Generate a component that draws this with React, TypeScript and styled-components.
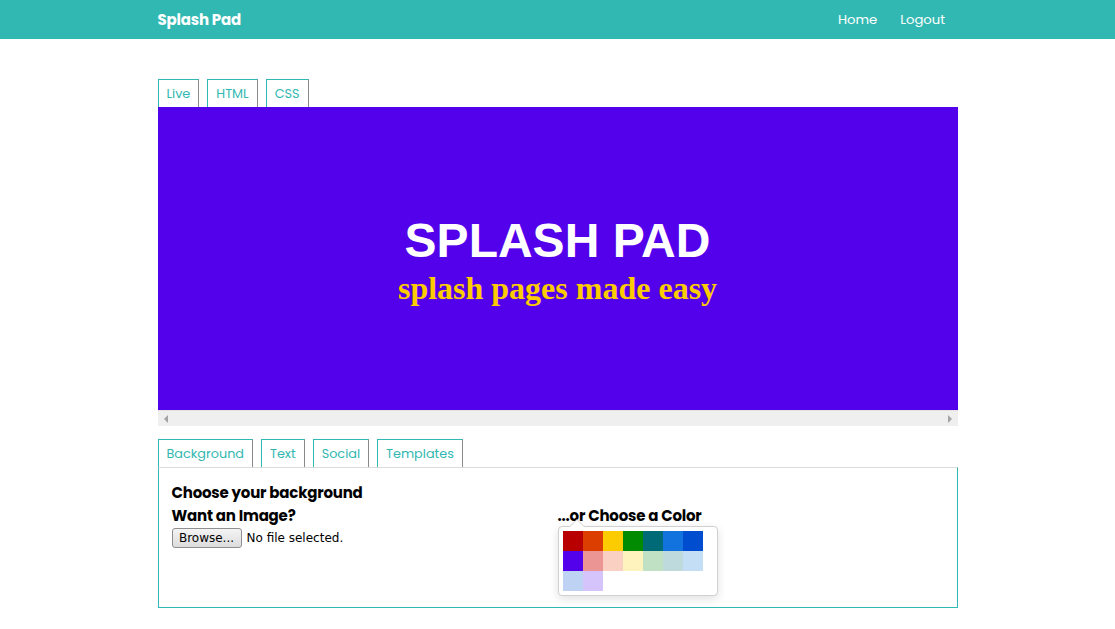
import React from "react";
import styled, { createGlobalStyle } from "styled-components";

const TEAL = "#32b8b2";
const UI = `"Poppins", "Inter", "Noto Sans", sans-serif`;

const Global = createGlobalStyle`
  html, body { margin: 0; padding: 0; background: #fff; }
  body { font-family: ${UI}; }
  * { box-sizing: border-box; }
`;

const Nav = styled.nav`
  height: 39px;
  background: ${TEAL};
`;

const NavInner = styled.div`
  width: 800px;
  margin: 0 auto;
  height: 100%;
  display: flex;
  align-items: center;
  justify-content: space-between;
`;

const Brand = styled.a`
  color: #fff;
  font-weight: 700;
  font-size: 15px;
  letter-spacing: -0.2px;
`;

const NavLinks = styled.div`
  display: flex;
  padding-right: 1px;
`;

const NavLink = styled.a`
  color: #fff;
  font-size: 13.2px;
  padding: 0 11.5px;
`;

const Main = styled.main`
  width: 800px;
  margin: 40px auto 0;
`;

const TabRow = styled.div`
  display: flex;
  gap: 8px;
`;

const Tab = styled.button`
  height: 28px;
  padding: 0 8px;
  background: #fff;
  border: 1px solid ${TEAL};
  border-right-color: #8a8a8a;
  border-bottom: none;
  color: ${TEAL};
  font-family: ${UI};
  font-size: 12.8px;
  line-height: 26px;
  cursor: pointer;
`;

const Preview = styled.div`
  height: 303px;
  background: #5300eb;
  display: flex;
  flex-direction: column;
  align-items: center;
  justify-content: center;
  padding-top: 4px;
`;

const Title = styled.h1`
  margin: 0;
  color: #fff;
  font-family: "Liberation Sans", Arial, sans-serif;
  font-weight: 700;
  font-size: 48px;
  line-height: 54px;
`;

const Subtitle = styled.h2`
  margin: 0;
  color: #fccb00;
  font-family: "Liberation Serif", "Times New Roman", serif;
  font-weight: 700;
  font-size: 32px;
  line-height: 40px;
`;

const Scrollbar = styled.div`
  height: 16px;
  background: #efefef;
  border-top: 1px solid #e2e2e2;
  display: flex;
  align-items: center;
  justify-content: space-between;
  padding: 0 6px;
`;

const Arrow = styled.span<{ $dir: "left" | "right" }>`
  width: 0;
  height: 0;
  border-top: 4px solid transparent;
  border-bottom: 4px solid transparent;
  ${(p) =>
    p.$dir === "left"
      ? "border-right: 4px solid #a3a3a3;"
      : "border-left: 4px solid #a3a3a3;"}
`;

const Editor = styled.section`
  margin-top: 13px;
`;

const Panel = styled.div`
  height: 141px;
  border: 1px solid ${TEAL};
  border-top: 1px solid #dcdcdc;
  padding: 15px 13px;
`;

const Heading = styled.h3`
  margin: 0;
  font-size: 15px;
  font-weight: 700;
  line-height: 19px;
  color: #000;
  letter-spacing: -0.2px;
`;

const Columns = styled.div`
  display: grid;
  grid-template-columns: 1fr 1fr;
  margin-top: 4px;
`;

const Column = styled.div`
  display: flex;
  flex-direction: column;
  align-items: flex-start;
`;

const FileRow = styled.div`
  display: flex;
  align-items: center;
  gap: 5px;
  margin-top: 3px;
  font-family: "DejaVu Sans", Tahoma, sans-serif;
  font-size: 12px;
  color: #000;
`;

const BrowseButton = styled.button`
  height: 20px;
  width: 70px;
  padding: 0;
  border: 1px solid #8f8f8f;
  border-radius: 3px;
  background: linear-gradient(#f4f4f4, #dcdcdc);
  font-family: "DejaVu Sans", Tahoma, sans-serif;
  font-size: 12px;
  color: #000;
`;

const Picker = styled.div`
  position: relative;
  margin-top: 1px;
  width: 160px;
  padding: 4px;
  background: #fff;
  border: 1px solid #d0d0d0;
  border-radius: 4px;
  box-shadow: 0 3px 10px rgba(0, 0, 0, 0.12);
  display: flex;
  flex-wrap: wrap;
  &::before {
    content: "";
    position: absolute;
    top: -8px;
    left: 10px;
    border: 8px solid transparent;
    border-top: 0;
    border-bottom-color: #d0d0d0;
  }
  &::after {
    content: "";
    position: absolute;
    top: -7px;
    left: 11px;
    border: 7px solid transparent;
    border-top: 0;
    border-bottom-color: #fff;
  }
`;

const Swatch = styled.div<{ $c: string }>`
  width: 20px;
  height: 20px;
  background: ${(p) => p.$c};
`;

const colors = [
  "#B80000", "#DB3E00", "#FCCB00", "#008B02", "#006B76", "#1273DE", "#004DCF",
  "#5300EB", "#EB9694", "#FAD0C3", "#FEF3BD", "#C1E1C5", "#BEDADC", "#C4DEF6",
  "#BED3F3", "#D4C4FB",
];

export default function App() {
  return (
    <>
      <Global />
      <Nav>
        <NavInner>
          <Brand>Splash Pad</Brand>
          <NavLinks>
            <NavLink>Home</NavLink>
            <NavLink>Logout</NavLink>
          </NavLinks>
        </NavInner>
      </Nav>
      <Main>
        <TabRow>
          <Tab>Live</Tab>
          <Tab>HTML</Tab>
          <Tab>CSS</Tab>
        </TabRow>
        <Preview>
          <Title>SPLASH PAD</Title>
          <Subtitle>splash pages made easy</Subtitle>
        </Preview>
        <Scrollbar>
          <Arrow $dir="left" />
          <Arrow $dir="right" />
        </Scrollbar>
        <Editor>
          <TabRow>
            <Tab>Background</Tab>
            <Tab>Text</Tab>
            <Tab>Social</Tab>
            <Tab>Templates</Tab>
          </TabRow>
          <Panel>
            <Heading>Choose your background</Heading>
            <Columns>
              <Column>
                <Heading>Want an Image?</Heading>
                <FileRow>
                  <BrowseButton>Browse...</BrowseButton>
                  <span>No file selected.</span>
                </FileRow>
              </Column>
              <Column>
                <Heading>...or Choose a Color</Heading>
                <Picker>
                  {colors.map((c) => (
                    <Swatch key={c} $c={c} />
                  ))}
                </Picker>
              </Column>
            </Columns>
          </Panel>
        </Editor>
      </Main>
    </>
  );
}
